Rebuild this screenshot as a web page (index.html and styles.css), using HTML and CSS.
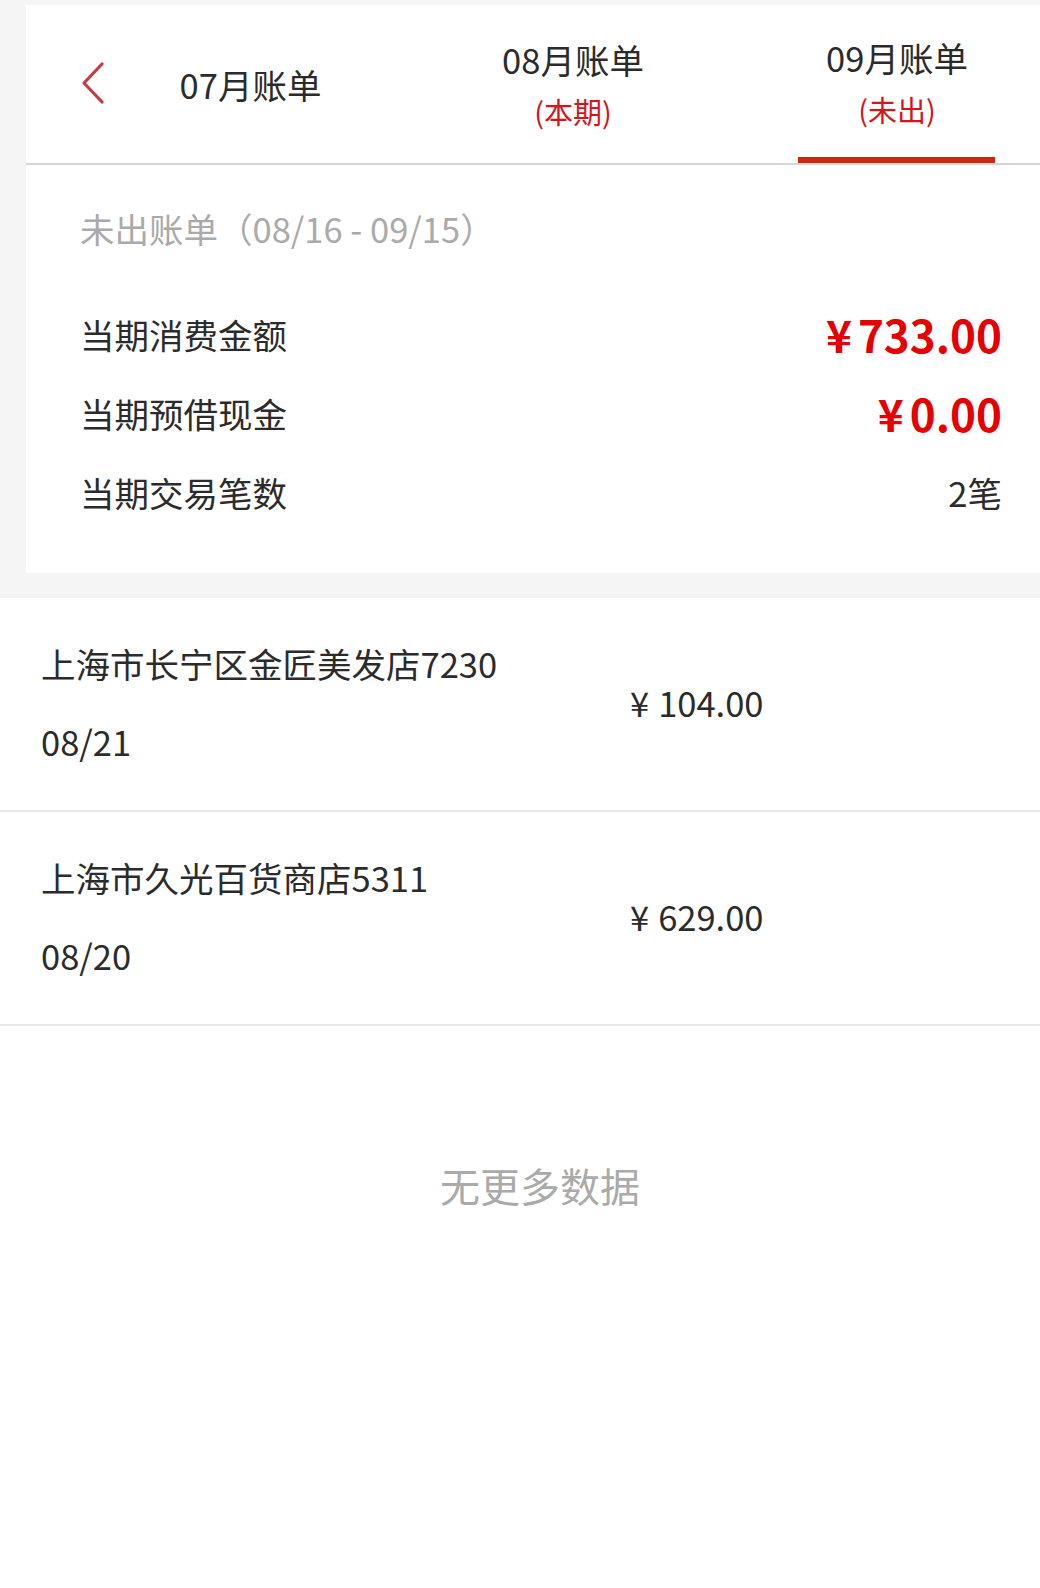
FILE: index.html
```html
<!DOCTYPE html>
<html lang="zh-CN">
<head>
    <meta charset="UTF-8">
    <meta name="viewport" content="width=device-width, initial-scale=1.0">
    <title>账单</title>
    <link rel="stylesheet" href="styles.css">
</head>
<body>
    <div class="page">
        <!-- month tabs -->
        <div class="bill-tabs">
            <div class="back-btn">
                <svg width="26" height="44" viewBox="0 0 26 44">
                    <path d="M21 2 L3 21 L21 40" fill="none" stroke="#c43c44" stroke-width="3.2" stroke-linecap="round" stroke-linejoin="round"/>
                </svg>
            </div>
            <div class="tab tab-first">
                <div class="tab-title">07月账单</div>
            </div>
            <div class="tab tab-second">
                <div class="tab-title">08月账单</div>
                <div class="tab-sub">(本期)</div>
            </div>
            <div class="tab tab-third active">
                <div class="tab-title">09月账单</div>
                <div class="tab-sub">(未出)</div>
                <div class="tab-line"></div>
            </div>
        </div>

        <!-- summary -->
        <div class="summary">
            <div class="summary-title">未出账单（08/16 - 09/15）</div>
            <div class="summary-row">
                <span class="summary-label">当期消费金额</span>
                <span class="summary-value red"><span class="yen">¥</span>733.00</span>
            </div>
            <div class="summary-row">
                <span class="summary-label">当期预借现金</span>
                <span class="summary-value red"><span class="yen">¥</span>0.00</span>
            </div>
            <div class="summary-row">
                <span class="summary-label">当期交易笔数</span>
                <span class="summary-value">2笔</span>
            </div>
        </div>

        <!-- transactions -->
        <div class="trade-list">
            <div class="trade-item">
                <div class="trade-info">
                    <div class="trade-name">上海市长宁区金匠美发店7230</div>
                    <div class="trade-date">08/21</div>
                </div>
                <div class="trade-amount"><span class="yen">¥</span>104.00</div>
            </div>
            <div class="trade-item">
                <div class="trade-info">
                    <div class="trade-name">上海市久光百货商店5311</div>
                    <div class="trade-date">08/20</div>
                </div>
                <div class="trade-amount"><span class="yen">¥</span>629.00</div>
            </div>
            <div class="no-more">无更多数据</div>
        </div>
    </div>
</body>
</html>
```

FILE: styles.css
```css
body {
    margin: 0;
    padding: 0;
    background-color: #f5f5f5;
    font-family: "Noto Sans CJK SC", "Noto Sans", sans-serif;
    color: #333;
    overflow: hidden;
}

.page {
    width: 1080px;
    padding-top: 5px;
}

.bill-tabs {
    display: flex;
    margin-left: 26px;
    height: 158px;
    background: #fff;
    border-bottom: 2px solid #d6d6d6;
}

.back-btn {
    width: 26px;
    margin-left: 55px;
    display: flex;
    align-items: center;
}

.back-btn svg {
    display: block;
}

.tab {
    position: relative;
    display: flex;
    flex-direction: column;
    align-items: center;
    justify-content: center;
    box-sizing: border-box;
}

.tab-first {
    width: 287px;
}

.tab-second {
    width: 358px;
    padding-top: 2px;
}

.tab-third {
    width: 290px;
    padding-bottom: 2px;
}

.tab-title {
    font-size: 34.5px;
    line-height: 52px;
    color: #2b2b2b;
}

.tab-sub {
    font-size: 29px;
    line-height: 52px;
    color: #d4161c;
}

.tab-line {
    position: absolute;
    left: 46px;
    bottom: 0;
    width: 197px;
    height: 6px;
    background: #c8290f;
}

.summary {
    margin: 0 26px;
    padding: 38px 52px 42px 54px;
    background: #fff;
}

.summary-title {
    font-size: 34.5px;
    line-height: 50px;
    color: #aaa;
    margin-bottom: 41px;
}

.summary-row {
    display: flex;
    justify-content: space-between;
    align-items: center;
    height: 79px;
}

.summary-label {
    font-size: 34.5px;
    color: #2b2b2b;
}

.summary-value {
    font-size: 34.5px;
    color: #2b2b2b;
}

.summary-value.red {
    font-size: 44px;
    font-weight: bold;
    color: #e60000;
}

.summary-value .yen {
    margin-right: 6px;
}

.trade-list {
    margin-top: 25px;
    background: #fff;
    min-height: 1000px;
}

.trade-item {
    display: flex;
    align-items: center;
    padding: 26px 0 30px 41px;
    border-bottom: 2px solid #e8e8e8;
}

.trade-info {
    width: 589px;
}

.trade-name,
.trade-date {
    font-size: 34.5px;
    line-height: 78px;
    color: #2b2b2b;
}

.trade-amount {
    font-size: 34.5px;
    color: #2b2b2b;
}

.trade-amount .yen {
    margin-right: 9px;
}

.no-more {
    padding-top: 129px;
    text-align: center;
    font-size: 40px;
    line-height: 60px;
    color: #aaa;
}
```
